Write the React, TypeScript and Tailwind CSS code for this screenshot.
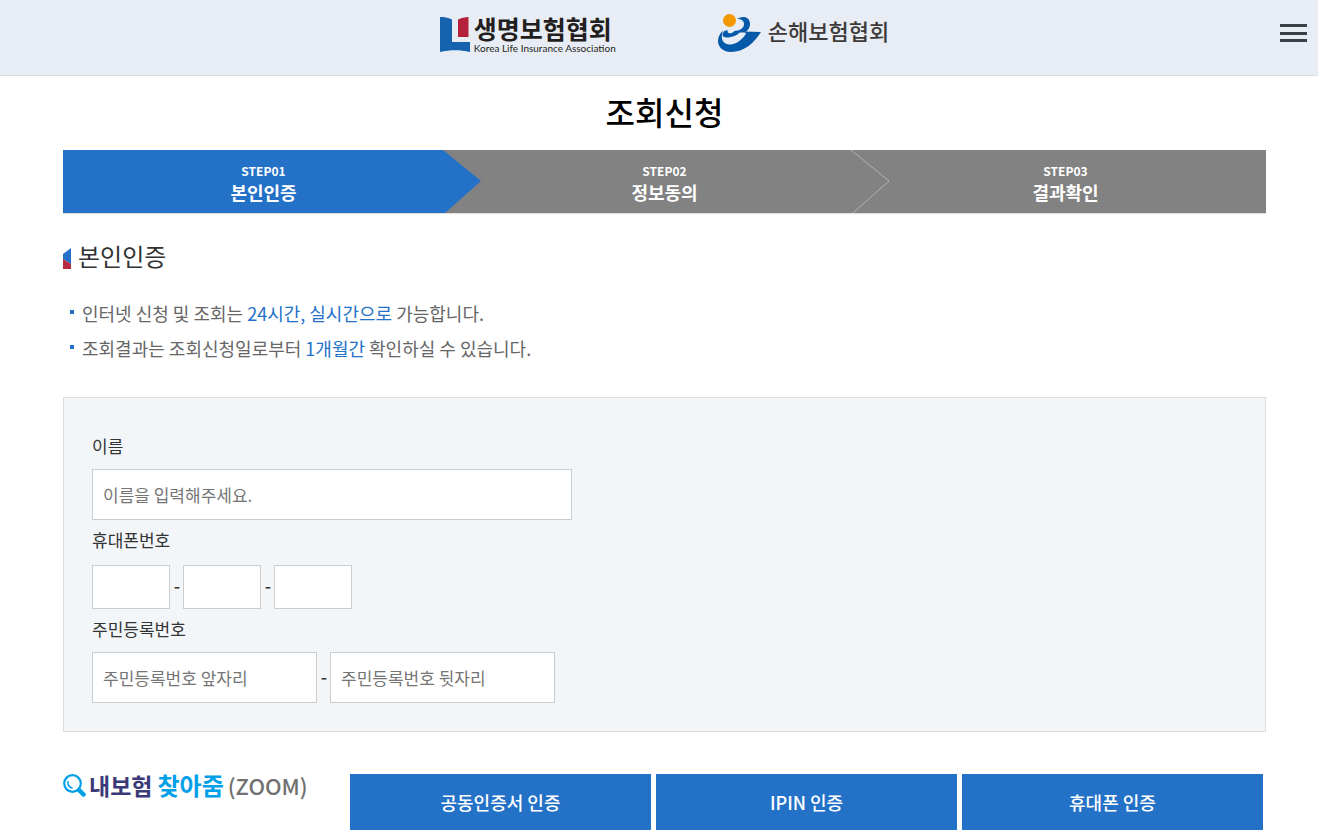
import { useState } from "react";

const steps = [
  { no: "STEP01", label: "본인인증" },
  { no: "STEP02", label: "정보동의" },
  { no: "STEP03", label: "결과확인" },
];

const authMethods = ["공동인증서 인증", "IPIN 인증", "휴대폰 인증"];

const inputClass =
  "border border-[#cccccc] bg-white px-[10px] text-[17px] text-[#333333] placeholder:text-[#757575] outline-none focus:border-[#2471c8]";

function LifeLogo() {
  return (
    <a href="#" className="flex items-start gap-1">
      <svg className="mt-[2px]" width="30" height="37" viewBox="0 0 30 37" aria-hidden="true">
        <path d="M0 1C4 1 8 1.500 12 3.500V26H30V36C20 33.500 10 33.500 0 36Z" fill="#1562ae" />
        <path d="M18 3.500C21 2 25 1 28.500 1V21H18Z" fill="#b5203a" />
      </svg>
      <span className="flex flex-col whitespace-nowrap">
        <span className="text-[25px] font-bold leading-7 text-[#231f20]">생명보험협회</span>
        <span className="font-['Lato',sans-serif] text-[10px] leading-[12px] text-[#231f20]">
          Korea Life Insurance Association
        </span>
      </span>
    </a>
  );
}

function GeneralLogo() {
  return (
    <a href="#" className="flex items-start gap-[7px]">
      <svg width="43" height="39" viewBox="0 0 43 39" aria-hidden="true">
        <g fill="#0459a8">
          <path d="M43 19C36 30 26 39 13 39C4 39 0 33 0 28C0 24 2 20 5 17.500C2 26 5 31 11 31.500C18 32 25 26 28 20.500L26 18.500Z" />
          <path d="M7 17.500C3 21 4 24.500 9 24.500C14 24.500 20 22 22 19L16 18.500C14 21 8 21 10 17.500Z" />
          <path d="M19 6C25 2 32 4 32 11C32 15 30 17 27 19.500H16V18C22 18 26 15 26 11C26 8 24 6 19 6Z" />
        </g>
        <circle cx="11.500" cy="7.500" r="6.500" fill="#f39800" />
      </svg>
      <span className="whitespace-nowrap text-[22px] font-medium leading-[34px] text-[#3e3a39]">손해보험협회</span>
    </a>
  );
}

function Header() {
  return (
    <header className="relative flex h-[76px] items-start justify-center gap-[102px] border-b border-[#d9dadd] bg-[#e8edf5] pl-[11px]">
      <div className="pt-[14px]">
        <LifeLogo />
      </div>
      <div className="pt-[13px]">
        <GeneralLogo />
      </div>
      <button type="button" aria-label="전체메뉴" className="absolute right-[11px] top-6 flex h-[18px] w-[27px] flex-col justify-between">
        <span className="h-[3px] w-full bg-[#3a4046]" />
        <span className="h-[3px] w-full bg-[#3a4046]" />
        <span className="h-[3px] w-full bg-[#3a4046]" />
      </button>
    </header>
  );
}

function StepBar() {
  return (
    <ol className="grid grid-cols-3 border-b border-[#dddddd] text-center text-white">
      {steps.map((step, i) => (
        <li key={step.no} className={`relative h-[63px] pt-3 ${i === 0 ? "bg-[#2471c8]" : "bg-[#828282]"}`}>
          <div className="text-xs font-bold leading-[18px]">{step.no}</div>
          <div className="text-lg font-bold leading-[25px]">{step.label}</div>
          {i === 0 && (
            <svg className="absolute -right-[17px] top-0 z-10" width="38" height="63" viewBox="0 0 38 63" aria-hidden="true">
              <rect width="38" height="63" fill="#828282" />
              <path d="M0 0L38 31L2 63H0Z" fill="#2471c8" />
            </svg>
          )}
          {i === 1 && (
            <svg className="absolute -right-[25px] top-0 z-10" width="39" height="63" viewBox="0 0 39 63" aria-hidden="true">
              <path d="M0 0L38 31L2 63" fill="none" stroke="#b4b4b4" />
            </svg>
          )}
        </li>
      ))}
    </ol>
  );
}

function Notice({ children }: { children: React.ReactNode }) {
  return (
    <li className="flex items-center gap-2 leading-[35px]">
      <span className="-mt-1 h-1 w-1 bg-[#2471c8]" />
      <span>{children}</span>
    </li>
  );
}

function Hyphen() {
  return <span className="w-[13px] pb-1 pl-px text-center text-lg font-medium leading-6">-</span>;
}

function IdentityForm() {
  const [name, setName] = useState("");

  return (
    <form className="border border-[#dddddd] bg-[#f2f6f9] px-7 pb-7 pt-9 text-[17px] text-[#333333]">
      <label htmlFor="name" className="block leading-6">이름</label>
      <input
        id="name"
        value={name}
        onChange={e => setName(e.target.value)}
        placeholder="이름을 입력해주세요."
        className={`${inputClass} mt-[11px] block h-[51px] w-[480px]`}
      />

      <label htmlFor="phone1" className="mt-2 block leading-6">휴대폰번호</label>
      <div className="mt-[13px] flex items-center">
        <input id="phone1" type="tel" maxLength={3} className={`${inputClass} h-11 w-[78px]`} />
        <Hyphen />
        <input type="tel" maxLength={4} aria-label="휴대폰번호 가운데자리" className={`${inputClass} h-11 w-[78px]`} />
        <Hyphen />
        <input type="tel" maxLength={4} aria-label="휴대폰번호 뒷자리" className={`${inputClass} h-11 w-[78px]`} />
      </div>

      <label htmlFor="rrn1" className="mt-2 block leading-6">주민등록번호</label>
      <div className="mt-[11px] flex items-center">
        <input id="rrn1" maxLength={6} placeholder="주민등록번호 앞자리" className={`${inputClass} h-[51px] w-[225px]`} />
        <Hyphen />
        <input type="password" maxLength={7} aria-label="주민등록번호 뒷자리" placeholder="주민등록번호 뒷자리" className={`${inputClass} h-[51px] w-[225px]`} />
      </div>
    </form>
  );
}

function ZoomLogo() {
  return (
    <a href="#" className="flex h-[22px] w-[287px] shrink-0 items-center whitespace-nowrap">
      <svg width="23" height="23" viewBox="0 0 23 23" fill="none" stroke="#00a0e9" aria-hidden="true">
        <circle cx="9.500" cy="9.500" r="8.300" strokeWidth="2.200" />
        <path d="M16 16L20.500 20.500" strokeWidth="4.500" strokeLinecap="round" />
        <path d="M5 7.500C4.500 10.500 6 13 9 14" strokeWidth="1.500" strokeLinecap="round" />
      </svg>
      <span className="ml-[3px] text-[23px] font-bold leading-6 text-[#3b3a78]">내보험</span>
      <span className="ml-[5px] text-2xl font-bold leading-6 text-[#00a0e9]">찾아줌</span>
      <span className="ml-1 text-[22px] font-medium leading-6 text-[#707070]">(ZOOM)</span>
    </a>
  );
}

export default function App() {
  return (
    <div className="min-h-screen bg-white font-['Noto_Sans_CJK_KR',sans-serif]">
      <Header />
      <main className="pb-[7px] pl-[63px] pr-[52px]">
        <h1 className="pb-[14px] pt-[10px] text-center text-[32px] font-medium leading-[50px] text-black">조회신청</h1>
        <StepBar />

        <h2 className="mt-6 flex items-center gap-[7px] text-2xl leading-9 text-[#333333]">
          <svg className="mt-1" width="8" height="21" viewBox="0 0 8 21" aria-hidden="true">
            <path d="M0 6L8 0V16L0 11Z" fill="#2471c8" />
            <path d="M0 11L8 16V21H0Z" fill="#b72b43" />
          </svg>
          본인인증
        </h2>

        <ul className="mb-[31px] mt-[22px] pl-[7px] text-lg text-[#666666]">
          <Notice>
            인터넷 신청 및 조회는 <em className="not-italic text-[#2471c8]">24시간, 실시간으로</em> 가능합니다.
          </Notice>
          <Notice>
            조회결과는 조회신청일로부터 <em className="not-italic text-[#2471c8]">1개월간</em> 확인하실 수 있습니다.
          </Notice>
        </ul>

        <IdentityForm />

        <div className="mt-[42px] flex pr-[3px]">
          <ZoomLogo />
          <div className="grid flex-1 grid-cols-3 gap-[5px]">
            {authMethods.map(method => (
              <button key={method} type="button" className="h-14 bg-[#2471c8] text-lg font-medium text-white">
                {method}
              </button>
            ))}
          </div>
        </div>
      </main>
    </div>
  );
}
